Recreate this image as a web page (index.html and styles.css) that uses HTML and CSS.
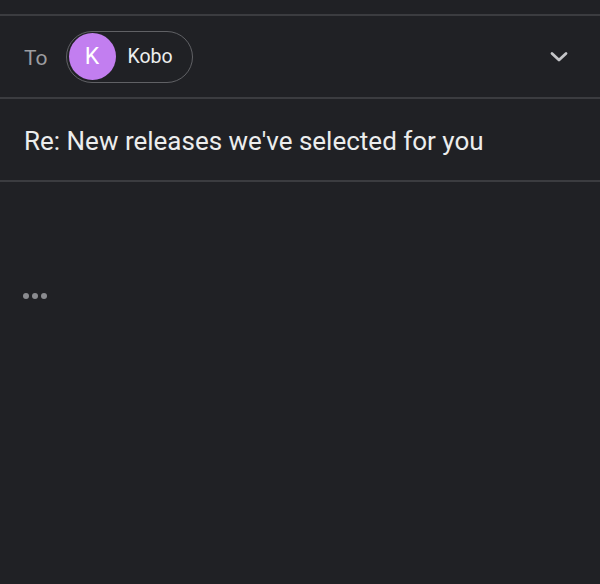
FILE: index.html
```html
<!DOCTYPE html>
<html>
<head>
<meta charset="utf-8">
<link rel="stylesheet" href="styles.css">
</head>
<body>
<div class="screen">
  <div class="top"></div>
  <div class="row to-row">
    <span class="to-label">To</span>
    <div class="chip">
      <span class="avatar">K</span>
      <span class="chip-name">Kobo</span>
    </div>
    <svg class="chevron" width="20" height="14" viewBox="0 0 20 14"><path d="M3 3.5 L10 10 L17 3.5" fill="none" stroke="#c4c5c8" stroke-width="2.8" stroke-linecap="round" stroke-linejoin="round"/></svg>
  </div>
  <div class="row subject-row">
    <span class="subject">Re: New releases we've selected for you</span>
  </div>
  <div class="body">
    <div class="dots"><span></span><span></span><span></span></div>
  </div>
</div>
</body>
</html>
```
FILE: styles.css
```css
html, body {
  margin: 0;
  padding: 0;
  background: #202125;
}
.screen {
  width: 600px;
  height: 584px;
  background: #202125;
  font-family: Roboto, "Noto Sans", sans-serif;
  overflow: hidden;
}
.top {
  height: 14px;
  border-bottom: 2px solid #3b3c40;
}
.row {
  display: flex;
  align-items: center;
  padding: 0 24px;
  border-bottom: 2px solid #3b3c40;
}
.to-row {
  height: 81px;
}
.to-label {
  color: #9c9da0;
  font-size: 21px;
  margin-right: 18px;
  margin-top: 3px;
}
.chip {
  display: flex;
  align-items: center;
  height: 50px;
  padding: 0 19px 0 2px;
  border: 1.5px solid #606165;
  border-radius: 27px;
}
.avatar {
  width: 47px;
  height: 47px;
  border-radius: 50%;
  background: #c27ef0;
  color: #ffffff;
  font-size: 23px;
  display: flex;
  align-items: center;
  justify-content: center;
}
.chip-name {
  color: #eceded;
  font-size: 19.5px;
  margin-left: 12px;
}
.chevron {
  margin-left: auto;
  margin-right: 7px;
}
.subject-row {
  height: 81px;
}
.subject {
  color: #eceded;
  font-size: 26px;
  margin-top: 2px;
}
.body {
  padding: 111px 23px 0;
}
.dots {
  display: flex;
  gap: 3px;
}
.dots span {
  width: 6px;
  height: 6px;
  border-radius: 50%;
  background: #8a8b8f;
}
```
